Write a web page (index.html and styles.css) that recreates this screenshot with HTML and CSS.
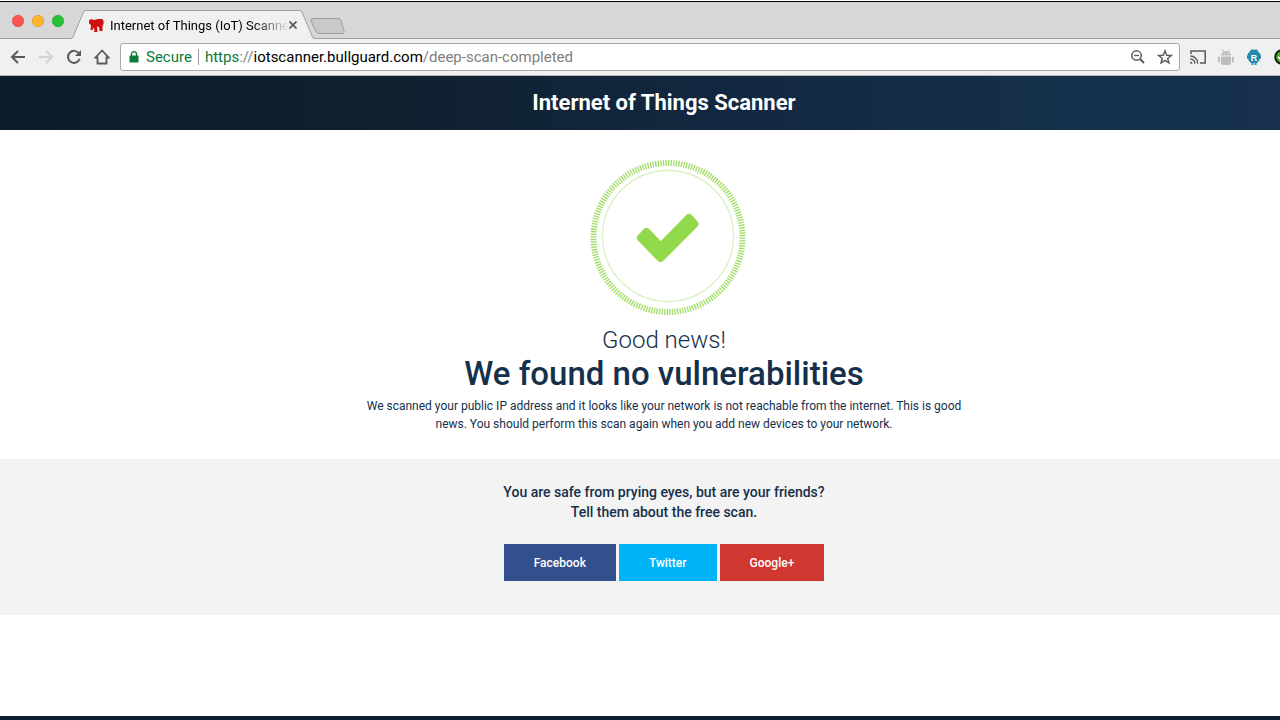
FILE: index.html
```html
<!DOCTYPE html>
<html lang="en">
<head>
<meta charset="utf-8">
<meta name="viewport" content="width=device-width, initial-scale=1">
<title>Internet of Things (IoT) Scanner</title>
<link rel="stylesheet" href="styles.css">
</head>
<body>
<div class="window">
  <div class="tab-strip">
    <svg class="strip-art" width="360" height="37" viewBox="0 0 360 37" aria-hidden="true">
      <circle cx="18" cy="19" r="5.7" fill="#fc5652" stroke="#e0443f" stroke-width=".7"/>
      <circle cx="38" cy="19" r="5.7" fill="#fdb52e" stroke="#dd9a20" stroke-width=".7"/>
      <circle cx="58" cy="19" r="5.7" fill="#27c138" stroke="#1ea52c" stroke-width=".7"/>
      <path d="M0 36.500H71Q72.500 36.500 73 35L83.500 10Q84 8.500 86 8.500H299.500Q301.500 8.500 302 10L312.500 35Q313 36.500 315 36.500H360V38H0Z" fill="#f0f0f0" stroke="#a0a0a0"/>
      <path d="M313 16.500H338Q340 16.500 341 18.500L344 29Q345 31.500 342 31.500H319Q317 31.500 316 29.500L311 19Q310 16.500 313 16.500Z" fill="#c9c9c9" stroke="#9d9d9d"/>
      <path d="M89 18.500L91 17L94 18L98 17H102L103.500 18.500V22L102.500 24V29H99.500L99 25L97 24.500L97.500 30H94L94.500 28L93.500 25.500L92.500 28H90.500L91 23L89 21.500Z" fill="#cf1010"/>
    </svg>
    <div class="tab">
      <span class="tab-title">Internet of Things (IoT) Scanne</span>
      <button class="tab-close" type="button" aria-label="Close tab"><svg width="8" height="8" viewBox="0 0 8 8"><path d="M0.500 .5L7.500 7.500M7.500 .5L.5 7.500" stroke="#555" stroke-width="1.700"/></svg></button>
    </div>
  </div>

  <div class="toolbar">
    <button class="tool" type="button" aria-label="Back"><svg width="16" height="16" viewBox="0 0 16 16"><path d="M15 8H2M8 2L2 8L8 14" fill="none" stroke="#5a5a5a" stroke-width="2"/></svg></button>
    <button class="tool" type="button" aria-label="Forward" disabled><svg width="16" height="16" viewBox="0 0 16 16"><path d="M1 8H14M8 2L14 8L8 14" fill="none" stroke="#d2d2d2" stroke-width="2"/></svg></button>
    <button class="tool" type="button" aria-label="Reload"><svg width="16" height="16" viewBox="0 0 16 16"><path d="M13 4.500A6 6 0 1 0 13.700 9.800" fill="none" stroke="#5a5a5a" stroke-width="2"/><path d="M15 1V7H9Z" fill="#5a5a5a"/></svg></button>
    <button class="tool" type="button" aria-label="Home"><svg width="16" height="16" viewBox="0 0 16 16"><path d="M1.500 8.500L8 1.500L14.500 8.500H12.500V14.500H3.500V8.500Z" fill="none" stroke="#5a5a5a" stroke-width="1.800"/></svg></button>
    <div class="address">
      <svg width="10" height="12" viewBox="0 0 10 12" aria-hidden="true"><rect x=".5" y="4.500" width="9" height="7" rx=".5" fill="#0b7a3b"/><path d="M2.500 5V3.200A2.500 2.500 0 0 1 7.500 3.200V5" fill="none" stroke="#0b7a3b" stroke-width="1.300"/></svg>
      <span class="secure">Secure</span>
      <span class="url"><span class="scheme">https</span>://<span class="host">iotscanner.bullguard.com</span>/deep-scan-completed</span>
      <button class="tool small" type="button" aria-label="Zoom"><svg width="16" height="16" viewBox="0 0 16 16"><circle cx="6.500" cy="6.500" r="4.700" fill="none" stroke="#5a5a5a" stroke-width="1.500"/><path d="M4 6.500H9" stroke="#5a5a5a" stroke-width="1.300"/><path d="M10 10L14 14" stroke="#5a5a5a" stroke-width="2"/></svg></button>
      <button class="tool small" type="button" aria-label="Bookmark this page"><svg width="16" height="16" viewBox="0 0 16 16"><path d="M8 1.800L9.700 6.200L14.400 6.400L10.700 9.400L12 14L8 11.400L4 14L5.300 9.400L1.600 6.400L6.300 6.200Z" fill="none" stroke="#5a5a5a" stroke-width="1.400"/></svg></button>
    </div>
    <div class="extensions">
      <button class="tool" type="button" aria-label="Cast"><svg width="16" height="14" viewBox="0 0 16 14"><path d="M1 4V1H15.200V13H10" fill="none" stroke="#5a5a5a" stroke-width="1.500"/><path d="M.3 6A7.500 7.500 0 0 1 7.800 13.700M.3 9A4.500 4.500 0 0 1 4.900 13.700" fill="none" stroke="#5a5a5a" stroke-width="1.400"/><path d="M.3 11.500A2.200 2.200 0 0 1 2.500 13.700H.3Z" fill="#5a5a5a"/></svg></button>
      <button class="tool" type="button" aria-label="Android extension"><svg width="16" height="16" viewBox="0 0 16 16" fill="#bdbdbd"><path d="M3 6.500C3 .8 13 .8 13 6.500Z"/><path d="M4.500 .3L6 3M11.500 .3L10 3" stroke="#bdbdbd"/><path d="M3 7.500H13V14Q13 16 11 16H5Q3 16 3 14Z"/><rect y="7.500" width="2" height="6" rx="1"/><rect x="14" y="7.500" width="2" height="6" rx="1"/><circle cx="6" cy="4.600" r=".7" fill="#f0f0f0"/><circle cx="10" cy="4.600" r=".7" fill="#f0f0f0"/></svg></button>
      <button class="tool" type="button" aria-label="R extension"><svg width="14" height="16" viewBox="0 0 14 16"><path d="M2.500 3L4 .5H6L7 1L8 .5H10L11.500 3L13 4.500L14 7V9.500L12.500 10V12L11 12.500V13.500L9.500 14V16H7.700V14H6.300V16H4.500V14L3 13.500V12.500L1.500 12V10L0 9.500V7L1 4.500Z" fill="#2588ae"/><text x="7" y="12" class="glyph">R</text></svg></button>
      <button class="tool" type="button" aria-label="Download extension"><svg width="16" height="16" viewBox="0 0 16 16"><circle cx="8" cy="8" r="6.800" fill="#38b21d" stroke="#111" stroke-width="1.800"/><path d="M4 8L8 11L12 8M8 4V10" fill="none" stroke="#fff" stroke-width="2"/></svg></button>
    </div>
  </div>

  <div class="page">
    <header class="site-header"><h1 class="site-title">Internet of Things Scanner</h1></header>
    <main>
      <section class="result">
        <svg class="badge" width="164" height="156" viewBox="-8 0 164 156" role="img" aria-label="Passed">
          <circle cx="78" cy="77.500" r="74.500" pathLength="450" fill="none" stroke="#a2de67" stroke-width="6" stroke-dasharray="1.300 1.200"/>
          <circle cx="78" cy="76" r="65.500" fill="none" stroke="#d9f2c2" stroke-width="1.300"/>
          <path d="M51 78L56.500 72L70.700 86.700L99 58L104.500 64L70.500 98Z" fill="#92d94c" stroke="#92d94c" stroke-width="8" stroke-linejoin="round"/>
        </svg>
        <p class="lead">Good news!</p>
        <h2 class="headline">We found no vulnerabilities</h2>
        <p class="details">We scanned your public IP address and it looks like your network is not reachable from the internet. This is good news. You should perform this scan again when you add new devices to your network.</p>
      </section>
      <section class="share">
        <p class="share-text">You are safe from prying eyes, but are your friends?<br>Tell them about the free scan.</p>
        <div class="share-links">
          <a class="share-link facebook" href="#">Facebook</a>
          <a class="share-link twitter" href="#">Twitter</a>
          <a class="share-link google" href="#">Google+</a>
        </div>
      </section>
    </main>
    <footer class="site-footer"></footer>
  </div>
</div>
</body>
</html>
```
FILE: styles.css
```css
* { box-sizing: border-box; }
body {
  margin: 0;
  overflow: hidden;
  background: #fff;
  color: #16304b;
  font-family: Roboto, "Liberation Sans", sans-serif;
}
h1, h2, p { margin: 0; }
button { border: 0; padding: 0; background: none; display: flex; }

/* The window runs past the right edge of the screen. */
.window {
  width: calc(100% + 48px);
  height: 100vh;
  display: flex;
  flex-direction: column;
}

.tab-strip {
  position: relative;
  flex: none;
  height: 39px;
  border-top: 1px solid #fff;
  background: #d7d7d7;
  box-shadow: inset 0 1px #000, inset 0 -1px #a0a0a0;
}
.strip-art { position: absolute; left: 0; bottom: 0; }
.tab {
  position: relative;
  display: flex;
  align-items: center;
  justify-content: space-between;
  width: 187px;
  height: 30px;
  margin: 9px 0 0 110px;
}
.tab-title {
  white-space: nowrap;
  color: #000;
  font-size: 13px;
  mask-image: linear-gradient(to right, #000 80%, transparent);
}

.toolbar {
  flex: none;
  display: flex;
  align-items: center;
  gap: 12px;
  height: 37px;
  padding-left: 10px;
  background: #f0f0f0;
  border-bottom: 1px solid #b8b8b8;
}
.tool { flex: none; width: 16px; align-items: center; justify-content: center; }
.address {
  flex: 1;
  display: flex;
  align-items: center;
  height: 28px;
  margin: 0 -2px;
  padding: 0 6px 0 8px;
  border: 1px solid #a9a9a9;
  border-radius: 3px;
  background: #fff;
  font-size: 15px;
  line-height: 16px;
}
.secure {
  margin-left: 7px;
  padding-right: 6px;
  border-right: 1px solid #999;
  color: #0b7a3b;
}
.url { flex: 1; padding-left: 6px; color: #808080; }
.scheme { color: #0b7a3b; }
.host { color: #000; }
.small { margin-left: 11px; }
.extensions { display: flex; gap: 12px; width: 138px; }
.glyph { fill: #fff; font-size: 9px; font-weight: 700; text-anchor: middle; }

.page { flex: 1; display: flex; flex-direction: column; text-align: center; }
.site-header {
  padding: 13px 0;
  background: linear-gradient(to right, #0d1c2a, #10202f 30%, #12263e 50%, #15304a 80%, #17314e);
}
.site-title { color: #fff; font-size: 22px; line-height: 28px; font-weight: 700; }
.result { padding: 30px 0 26px; }
.badge { display: block; margin: 0 auto; }
.lead { font-size: 24px; line-height: 36px; font-weight: 300; margin-top: 6px; }
.headline { font-size: 33px; line-height: 32px; font-weight: 500; }
.details { width: 600px; margin: 7px auto 0; font-size: 12px; line-height: 18px; }
.share { padding: 23px 0 34px; background: #f3f3f3; }
.share-text { font-size: 14px; line-height: 20px; font-weight: 500; }
.share-links { display: flex; justify-content: center; gap: 3px; margin-top: 22px; }
.share-link {
  padding: 1px 30px 0;
  color: #fff;
  font-size: 12px;
  line-height: 36px;
  font-weight: 500;
  text-decoration: none;
}
.facebook { background: #344f8d; }
.twitter { background: #00b3f7; }
.google { background: #d03730; }
.site-footer { height: 4px; margin-top: auto; background: #0c1e31; }
```
